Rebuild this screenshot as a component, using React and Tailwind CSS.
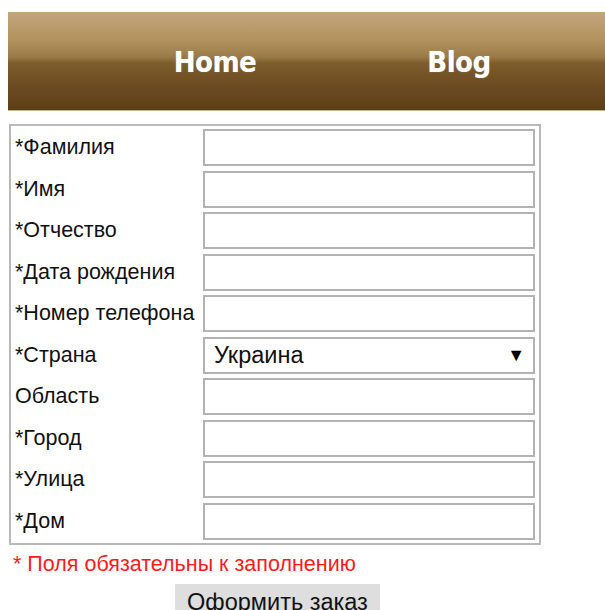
import React from "react";

const fields = [
  { label: "*Фамилия" },
  { label: "*Имя" },
  { label: "*Отчество" },
  { label: "*Дата рождения" },
  { label: "*Номер телефона" },
  { label: "*Страна", select: "Украина" },
  { label: "Область" },
  { label: "*Город" },
  { label: "*Улица" },
  { label: "*Дом" },
];

export default function App() {
  return (
    <div className="min-h-[610px] bg-white pt-[12px] font-['Liberation_Sans',Arial,sans-serif] text-[#111]">
      {/* top navigation bar */}
      <nav className="ml-[8px] flex h-[99px] items-center border-b border-[#c9b089] bg-[linear-gradient(to_bottom,#c2a57d_0%,#b3945f_28%,#9a7a48_46%,#7e5d2d_52%,#6b4c21_75%,#5d3f17_100%)] pl-[85px]">
        <a className="w-[244px] pt-[3px] text-center font-['DejaVu_Sans_Condensed','DejaVu_Sans',sans-serif] text-[29px] font-semibold tracking-[-0.5px] text-white [text-shadow:0_0_1px_rgba(255,255,255,0.4)]">
          Home
        </a>
        <a className="w-[244px] pt-[3px] text-center font-['DejaVu_Sans_Condensed','DejaVu_Sans',sans-serif] text-[29px] font-semibold tracking-[-0.5px] text-white [text-shadow:0_0_1px_rgba(255,255,255,0.4)]">
          Blog
        </a>
      </nav>

      {/* order form */}
      <form className="ml-[9px] mt-[13px] w-[532px]">
        <div className="border-2 border-[#b9b9b9] p-px">
          {fields.map((f) => (
            <div key={f.label} className="flex h-[41.5px] items-center">
              <label className="w-[191px] pl-[3px] text-[21.5px] leading-none">{f.label}</label>
              {f.select ? (
                <div className="mr-[3px] flex h-[37px] flex-1 items-center justify-between border-2 border-[#b3b3b3] bg-white pl-[9px] pr-[8px] text-[23.5px] leading-none">
                  <span>{f.select}</span>
                  <span className="text-[18px] text-black">▼</span>
                </div>
              ) : (
                <input className="mr-[3px] h-[37px] flex-1 border-2 border-[#b3b3b3] bg-white outline-none" />
              )}
            </div>
          ))}
        </div>
        <p className="ml-[4px] mt-[9px] text-[21.5px] leading-none text-[#ff1a1a]">
          * Поля обязательны к заполнению
        </p>
        <div className="mt-[8px] flex justify-center pl-[5px]">
          <button type="button" className="h-[34px] w-[205px] bg-[#dedede] pt-[4px] text-[23.5px] leading-none text-[#111]">
            Оформить заказ
          </button>
        </div>
      </form>
    </div>
  );
}
